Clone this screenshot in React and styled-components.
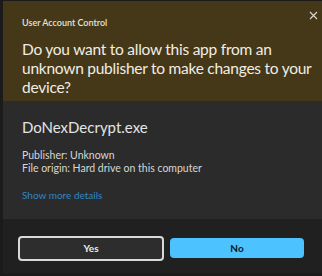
import React from "react";
import styled, { createGlobalStyle } from "styled-components";

const GlobalStyle = createGlobalStyle`
  html, body {
    margin: 0;
    padding: 0;
    background: #1b1b1b;
  }
  body {
    font-family: "Segoe UI", Lato, "Noto Sans", sans-serif;
  }
`;

const Dialog = styled.div`
  width: 319px;
  height: 272px;
  margin: 1px 0 3px 3px;
  display: flex;
  flex-direction: column;
  background: #2b2b2b;
  overflow: hidden;
`;

const Header = styled.div`
  position: relative;
  background: #453818;
  padding: 16px 8px 0 19px;
  height: 100px;
  box-sizing: border-box;
`;

const Caption = styled.div`
  color: #e6e2d8;
  font-size: 9px;
  font-weight: 600;
  line-height: 12px;
`;

const Question = styled.div`
  color: #f1ede4;
  font-size: 15.5px;
  letter-spacing: -0.25px;
  line-height: 19px;
  margin-top: 11px;
`;

const Close = styled.button`
  position: absolute;
  top: 6px;
  right: 1px;
  width: 16px;
  height: 16px;
  padding: 0;
  border: 0;
  background: none;
  display: flex;
  align-items: center;
  justify-content: center;
`;

const Body = styled.div`
  flex: 1;
  padding: 16px 19px 0;
  color: #e4e4e4;
`;

const AppName = styled.div`
  font-size: 15px;
  line-height: 20px;
`;

const Meta = styled.div`
  margin-top: 12px;
  font-size: 10.5px;
  line-height: 13px;
  color: #d6d6d6;
`;

const Details = styled.div`
  margin-top: 14px;
  font-size: 10px;
  line-height: 13px;
  color: #2f86c8;
`;

const Footer = styled.div`
  height: 54px;
  background: #202020;
  display: flex;
  align-items: center;
  gap: 6px;
  padding: 0 15px 0 15px;
  box-sizing: border-box;
`;

const Button = styled.button`
  flex: ${(p) => (p.primary ? "134px" : "146px")} 0 0;
  height: ${(p) => (p.primary ? "20px" : "25px")};
  margin-top: 4px;
  border-radius: 4px;
  border: ${(p) => (p.primary ? "0" : "2px solid #d9d9d9")};
  background: ${(p) => (p.primary ? "#4cc2ff" : "#2d2d2d")};
  color: ${(p) => (p.primary ? "#0b1620" : "#ececec")};
  font-family: inherit;
  font-size: 10px;
  font-weight: 700;
  padding: 0;
`;

export default function App() {
  return (
    <>
      <GlobalStyle />
      <Dialog>
        <Header>
          <Caption>User Account Control</Caption>
          <Question>
            Do you want to allow this app from an unknown publisher to make
            changes to your device?
          </Question>
          <Close>
            <svg width="9" height="9" viewBox="0 0 9 9">
              <path d="M1 1L8 8M8 1L1 8" stroke="#d8d4ca" strokeWidth="1.2" />
            </svg>
          </Close>
        </Header>
        <Body>
          <AppName>DoNexDecrypt.exe</AppName>
          <Meta>
            Publisher: Unknown
            <br />
            File origin: Hard drive on this computer
          </Meta>
          <Details>Show more details</Details>
        </Body>
        <Footer>
          <Button>Yes</Button>
          <Button primary>No</Button>
        </Footer>
      </Dialog>
    </>
  );
}
